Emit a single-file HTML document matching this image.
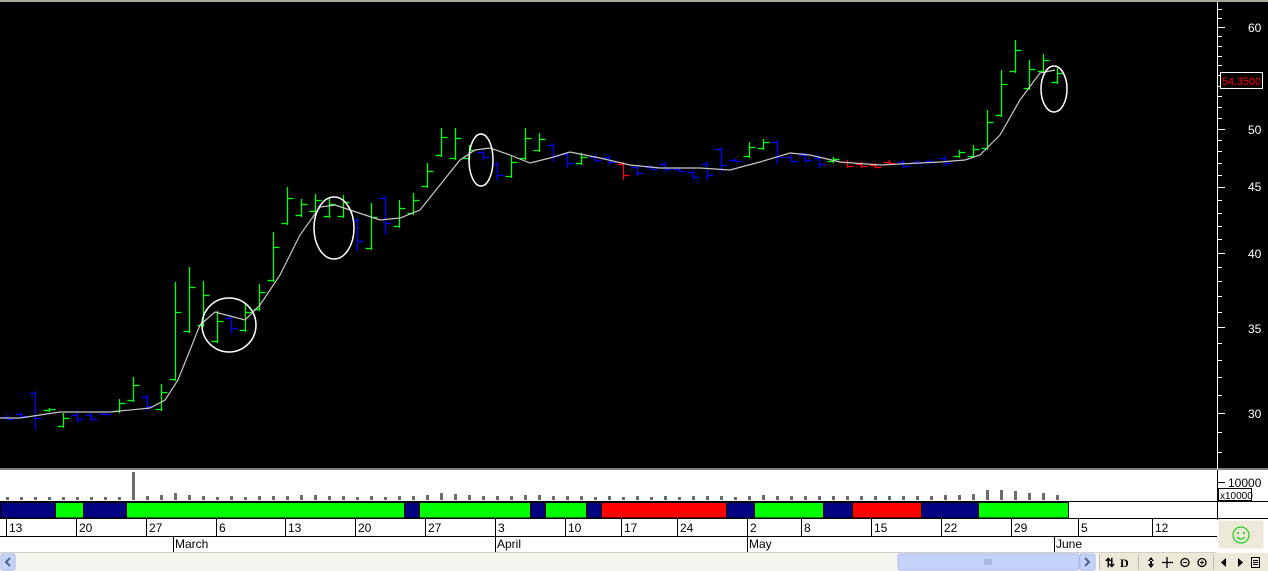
<!DOCTYPE html>
<html><head><meta charset="utf-8"><style>
html,body{margin:0;padding:0;width:1268px;height:571px;overflow:hidden;background:#ece9d8;font-family:"Liberation Sans",sans-serif}
svg{display:block}
</style></head><body>
<svg id="s" width="1268" height="571" xmlns="http://www.w3.org/2000/svg" font-family="Liberation Sans, sans-serif">
<rect x="0" y="0" width="1268" height="571" fill="#ece9d8"/>
<rect x="0" y="0" width="1268" height="3" fill="#a8a89c"/>
<rect x="0" y="2" width="1268" height="466" fill="#000"/>
<rect x="0" y="468" width="1268" height="2" fill="#808080"/>
<rect x="0" y="470" width="1268" height="83" fill="#fff"/>
<line x1="1217.5" y1="2" x2="1217.5" y2="552" stroke="#fff"/>
<line x1="1217.5" y1="470" x2="1217.5" y2="520" stroke="#000"/>
<g id="bars"></g>
<polyline id="ma" fill="none" stroke="#c8c8c8" stroke-width="1.2"/>
<g fill="none" stroke="#fff" stroke-width="1.5">
<ellipse cx="229" cy="325" rx="27" ry="27"/>
<ellipse cx="334" cy="228" rx="20" ry="31"/>
<ellipse cx="481" cy="160" rx="12" ry="26"/>
<ellipse cx="1054" cy="89" rx="13" ry="23"/>
</g>
<g id="axis" stroke="#fff"></g>
<g fill="#fff" font-size="12">
<text x="1248" y="32">60</text><text x="1248" y="134">50</text><text x="1248" y="191">45</text>
<text x="1248" y="258">40</text><text x="1248" y="333">35</text><text x="1248" y="418">30</text>
</g>
<rect x="1220.5" y="72.5" width="42" height="16" fill="#000" stroke="#fff"/>
<text x="1222" y="85" fill="#f00" font-size="11" textLength="39" lengthAdjust="spacingAndGlyphs">54.3500</text>
<g id="vol" fill="#6c6c6c"></g>
<line x1="1217" y1="482.5" x2="1225" y2="482.5" stroke="#000"/>
<text x="1228" y="487" font-size="12">10000</text>
<rect x="1218.5" y="488.5" width="33" height="12" fill="#fff" stroke="#000"/>
<text x="1220" y="499" font-size="10">x10000</text>
<line x1="0" y1="501.5" x2="1268" y2="501.5" stroke="#000"/>
<g id="strip"></g>
<line x1="0" y1="518.5" x2="1268" y2="518.5" stroke="#000"/>
<line x1="0" y1="536.5" x2="1217" y2="536.5" stroke="#000"/>
<line x1="0" y1="552.5" x2="1217" y2="552.5" stroke="#d0d0c8"/>
<g id="dates" font-size="12" fill="#000"></g>
<rect x="1218" y="520" width="46" height="29" fill="#ece9d8" stroke="#fff"/>
<circle cx="1241" cy="535" r="8" fill="none" stroke="#0c0"/>
<circle cx="1238" cy="533" r="1" fill="#0c0"/><circle cx="1244" cy="533" r="1" fill="#0c0"/>
<path d="M1237 537 Q1241 541 1245 537" fill="none" stroke="#0c0"/>
<rect x="0" y="553" width="1100" height="18" fill="#f6f5ef"/>
<rect x="1" y="554" width="14" height="16" rx="2" fill="#c5d3fb" stroke="#aab8e8"/>
<path d="M10 558 L6 562 L10 566" fill="none" stroke="#4d6185" stroke-width="2"/>
<rect x="898" y="554" width="181" height="16" rx="2" fill="#c5d3fb" stroke="#aab8e8"/>
<path d="M985 559v6M987 559v6M989 559v6M991 559v6" stroke="#8a9ccc"/>
<rect x="1080" y="554" width="15" height="16" rx="2" fill="#c5d3fb" stroke="#aab8e8"/>
<path d="M1085 558 L1089 562 L1085 566" fill="none" stroke="#4d6185" stroke-width="2"/>
<g fill="#000" font-size="12" font-weight="bold">
<line x1="1099.5" y1="554" x2="1099.5" y2="570" stroke="#c0bca8"/>
<text x="1105" y="567">⇅</text><text x="1120" y="567" font-family="Liberation Serif">D</text>
<line x1="1138.5" y1="554" x2="1138.5" y2="570" stroke="#c0bca8"/>
<path d="M1151 557l-3 4h6zM1151 568l-3-4h6zM1150 560h2v5h-2z"/>
<path d="M1167 557v11M1162 562.5h11" stroke="#000" stroke-width="1.3"/>
<circle cx="1185" cy="562.5" r="4" fill="none" stroke="#000" stroke-width="1.3"/><path d="M1183 562.5h4" stroke="#000"/>
<circle cx="1202" cy="562.5" r="4" fill="none" stroke="#000" stroke-width="1.3"/><path d="M1200 562.5h4M1202 560.5v4" stroke="#000"/>
<line x1="1213.5" y1="554" x2="1213.5" y2="570" stroke="#c0bca8"/>
<path d="M1226 558v9l-5-4.5z"/><path d="M1238 558v9l5-4.5z"/>
<rect x="1251.5" y="557.5" width="8" height="10" fill="none" stroke="#000"/><path d="M1253 560.5h5M1253 562.5h5M1253 564.5h5" stroke="#000"/>
</g>
</svg>
<script>
var NS="http://www.w3.org/2000/svg";
function el(p,t,a,txt){var e=document.createElementNS(NS,t);for(var k in a)e.setAttribute(k,a[k]);if(txt)e.textContent=txt;p.appendChild(e);return e;}
var B=[[415,420,'b'],[412,418,'b'],[391,430,'b'],[408,412,'g'],[413,428,'g'],[413,422,'b'],[413,421,'b'],[412,415,'b'],[399,413,'g'],[377,402,'g'],[395,411,'b'],[384,411,'g'],[282,381,'g'],[267,333,'g'],[281,327,'g'],[311,343,'g'],[316,333,'b'],[303,332,'g'],[284,311,'g'],[232,282,'g'],[187,225,'g'],[199,217,'g'],[194,213,'g'],[198,218,'g'],[195,218,'g'],[218,251,'b'],[203,250,'g'],[196,235,'b'],[200,228,'g'],[193,215,'g'],[163,188,'g'],[128,157,'g'],[128,160,'g'],[145,160,'g'],[150,160,'b'],[162,180,'b'],[155,178,'g'],[128,160,'g'],[133,152,'g'],[143,162,'b'],[152,168,'b'],[153,165,'g'],[155,162,'b'],[155,165,'b'],[162,180,'r'],[165,176,'b'],[165,170,'b'],[162,172,'b'],[167,172,'b'],[170,180,'b'],[162,180,'b'],[147,172,'b'],[158,162,'b'],[142,158,'g'],[139,150,'g'],[140,164,'b'],[155,163,'b'],[153,163,'b'],[156,168,'b'],[157,163,'g'],[160,168,'r'],[162,168,'r'],[163,168,'r'],[160,164,'r'],[160,168,'b'],[160,164,'b'],[159,163,'b'],[156,166,'b'],[150,158,'g'],[145,158,'g'],[110,150,'g'],[70,117,'g'],[40,73,'g'],[60,90,'g'],[54,73,'g'],[68,84,'g']];
var C={g:'#00ff00',b:'#0000ff',r:'#ff0000'};
var g=document.getElementById('bars');
var VH=[3,3,3,3,3,3,3,3,3,28,4,5,7,5,4,3,4,3,4,4,4,5,5,4,4,3,4,3,4,4,5,7,6,5,4,4,4,5,5,4,4,4,3,4,3,4,3,4,3,4,4,4,3,4,5,4,4,4,4,4,4,4,4,4,4,4,4,5,5,6,10,10,9,7,7,5];
B.forEach(function(b,i){var x=7+14*i+0.5,c=C[b[2]];var h=b[0],l=b[1];
 var o=b[2]=='g'?l-2:h+2, cl=b[2]=='g'?h+(l-h)*0.3:l-(l-h)*0.3;
 el(g,'line',{x1:x,y1:h,x2:x,y2:l,stroke:c,'stroke-width':1.3});
 el(g,'line',{x1:x-6,y1:Math.round(o)+.5,x2:x,y2:Math.round(o)+.5,stroke:c,'stroke-width':1.3});
 el(g,'line',{x1:x,y1:Math.round(cl)+.5,x2:x+6,y2:Math.round(cl)+.5,stroke:c,'stroke-width':1.3});
 var vh=VH[i]||3;
 el(document.getElementById('vol'),'rect',{x:x-1.5,y:500-vh,width:3,height:vh});
});
document.getElementById('ma').setAttribute('points',"0,418 20,418 60,412 110,412 150,408 165,400 178,380 200,325 215,312 230,316 245,320 260,305 280,275 300,235 320,207 335,205 350,210 380,220 400,218 420,210 440,185 460,160 475,150 490,148 510,155 530,163 550,158 570,152 600,158 630,165 660,168 700,168 730,170 760,162 790,153 810,155 840,162 880,165 940,162 965,160 980,155 1000,135 1020,100 1040,73 1055,70");
var ax=document.getElementById('axis');
for(var p=28;p<=62;p++){var y=27+557*(Math.log(60)-Math.log(p));if(y<3||y>466)continue;var maj=(p%5==0);
 el(ax,'line',{x1:1217,y1:Math.round(y)+.5,x2:1217+(maj?8:5),y2:Math.round(y)+.5});}
var S=[[0,55,'#000080'],[55,83,'#00ff00'],[83,126,'#000080'],[126,404,'#00ff00'],[404,419,'#000080'],[419,530,'#00ff00'],[530,545,'#000080'],[545,586,'#00ff00'],[586,601,'#000080'],[601,726,'#ff0000'],[726,754,'#000080'],[754,823,'#00ff00'],[823,852,'#000080'],[852,921,'#ff0000'],[921,978,'#000080'],[978,1068,'#00ff00']];
var st=document.getElementById('strip');
S.forEach(function(s){el(st,'rect',{x:s[0]+.5,y:502.5,width:s[1]-s[0],height:15.5,fill:s[2],stroke:'#000'});});
var D=[[6,'13'],[76,'20'],[146,'27'],[216,'6'],[285,'13'],[355,'20'],[425,'27'],[495,'3'],[565,'10'],[621,'17'],[677,'24'],[747,'2'],[801,'8'],[871,'15'],[941,'22'],[1011,'29'],[1078,'5'],[1152,'12']];
var dg=document.getElementById('dates');
D.forEach(function(d){el(dg,'line',{x1:d[0]+.5,y1:519,x2:d[0]+.5,y2:536,stroke:'#000'});el(dg,'text',{x:d[0]+3,y:532},d[1]);});
[[173,'March'],[495,'April'],[747,'May'],[1054,'June']].forEach(function(m){el(dg,'line',{x1:m[0]+.5,y1:536,x2:m[0]+.5,y2:552,stroke:'#000'});el(dg,'text',{x:m[0]+2,y:548},m[1]);});
</script>
</body></html>
